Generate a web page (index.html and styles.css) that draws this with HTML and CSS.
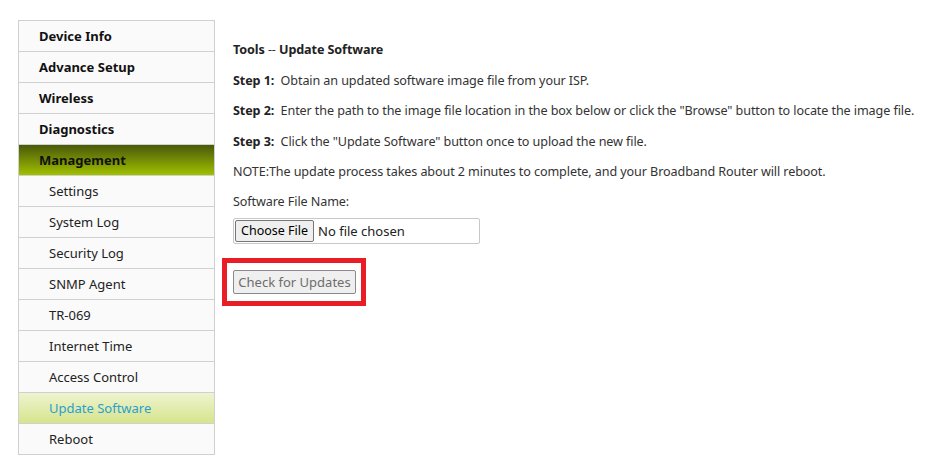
FILE: index.html
```html
<!DOCTYPE html>
<html>
<head>
<meta charset="utf-8">
<link rel="stylesheet" href="styles.css">
</head>
<body>
<div class="page">
  <ul class="menu">
    <li class="item top">Device Info</li>
    <li class="item top">Advance Setup</li>
    <li class="item top">Wireless</li>
    <li class="item top">Diagnostics</li>
    <li class="item top open">Management</li>
    <li class="item sub">Settings</li>
    <li class="item sub">System Log</li>
    <li class="item sub">Security Log</li>
    <li class="item sub">SNMP Agent</li>
    <li class="item sub">TR-069</li>
    <li class="item sub">Internet Time</li>
    <li class="item sub">Access Control</li>
    <li class="item sub active">Update Software</li>
    <li class="item sub">Reboot</li>
  </ul>
  <div class="content">
    <div class="title"><b>Tools</b> -- <b>Update Software</b></div>
    <p class="line"><b>Step 1:</b>&nbsp; Obtain an updated software image file from your ISP.</p>
    <p class="line"><b>Step 2:</b>&nbsp; Enter the path to the image file location in the box below or click the "Browse" button to locate the image file.</p>
    <p class="line"><b>Step 3:</b>&nbsp; Click the "Update Software" button once to upload the new file.</p>
    <p class="line">NOTE:The update process takes about 2 minutes to complete, and your Broadband Router will reboot.</p>
    <p class="line">Software File Name:</p>
    <div class="filebox"><span class="choose">Choose File</span><span class="nofile">No file chosen</span></div>
    <div class="highlight"><button class="check" disabled>Check for Updates</button></div>
  </div>
</div>
</body>
</html>
```
FILE: styles.css
```css
html, body {
  margin: 0;
  padding: 0;
  background: #ffffff;
}
body {
  font-family: "Noto Sans", "Open Sans", sans-serif;
  font-size: 13px;
  color: #333333;
}
.page {
  display: flex;
  align-items: flex-start;
  padding: 20px 0 0 18px;
}
.menu {
  list-style: none;
  margin: 0;
  padding: 0;
  width: 195px;
  border: 1px solid #d0d0d0;
  border-bottom: none;
  flex-shrink: 0;
}
.item {
  height: 30px;
  line-height: 30px;
  border-bottom: 1px solid #d0d0d0;
  background: #fafafa;
  white-space: nowrap;
}
.top {
  padding-left: 20px;
  font-weight: bold;
  color: #111111;
}
.sub {
  padding-left: 30px;
  color: #222222;
}
.open {
  background: linear-gradient(to bottom, #4a580a, #a0c000);
  color: #111111;
}
.active {
  background: linear-gradient(to bottom, #eef4d0, #d6e48c);
  color: #2a9fd0;
}
.content {
  margin-left: 18px;
  padding-top: 21px;
  display: flex;
  flex-direction: column;
  align-items: flex-start;
  font-size: 12.6px;
  letter-spacing: -0.1px;
}
.title {
  height: 18px;
  line-height: 18px;
  margin-bottom: 13px;
  white-space: nowrap;
}
.title b, .line b {
  color: #222222;
}
.line {
  margin: 0;
  height: 18px;
  line-height: 18px;
  margin-bottom: 12px;
  white-space: nowrap;
}
.line:nth-of-type(2) {
  margin-bottom: 12.5px;
}
.filebox {
  margin-top: -5px;
  width: 244px;
  height: 24px;
  border: 1px solid #c8c8c8;
  border-radius: 2px;
  display: flex;
  align-items: center;
  padding-left: 1px;
  letter-spacing: 0;
}
.choose {
  display: inline-block;
  height: 20px;
  line-height: 20px;
  padding: 0 5px;
  border: 1px solid #767676;
  border-radius: 2px;
  background: #efefef;
  color: #000000;
  font-size: 12.5px;
}
.nofile {
  margin-left: 4px;
  color: #222222;
  font-size: 13px;
}
.highlight {
  margin-top: 14px;
  margin-left: -11px;
  border: 5px solid #e81d25;
  padding: 7px 5px 7px 6px;
}
.check {
  display: block;
  width: 123px;
  height: 24px;
  padding: 0;
  border: 1px solid #8a8a8a;
  border-radius: 2px;
  background: #efefef;
  color: #6d6d6d;
  font-family: "Noto Sans", sans-serif;
  font-size: 13px;
  letter-spacing: 0;
}
```
